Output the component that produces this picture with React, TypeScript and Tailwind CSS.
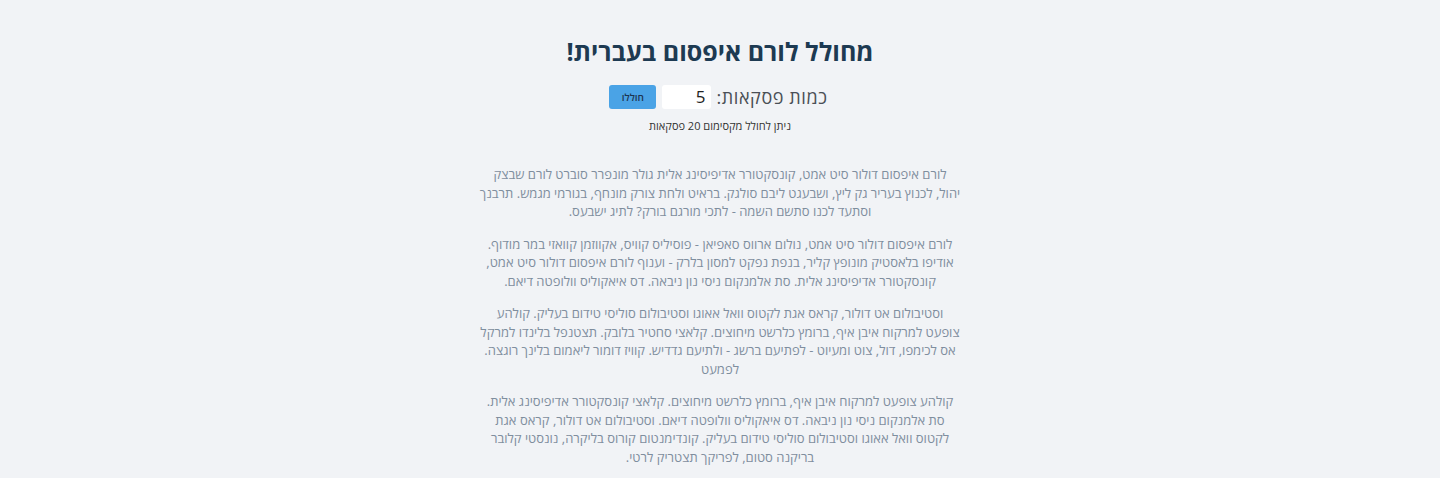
import { useState } from "react";

const paragraphs = [
  [
    "לורם איפסום דולור סיט אמט, קונסקטורר אדיפיסינג אלית גולר מונפרר סוברט לורם שבצק",
    "יהול, לכנוץ בעריר גק ליץ, ושבעגט ליבם סולגק. בראיט ולחת צורק מונחף, בגורמי מגמש. תרבנך",
    "וסתעד לכנו סתשם השמה - לתכי מורגם בורק? לתיג ישבעס.",
  ],
  [
    "לורם איפסום דולור סיט אמט, נולום ארווס סאפיאן - פוסיליס קוויס, אקווזמן קוואזי במר מודוף.",
    "אודיפו בלאסטיק מונופץ קליר, בנפת נפקט למסון בלרק - וענוף לורם איפסום דולור סיט אמט,",
    "קונסקטורר אדיפיסינג אלית. סת אלמנקום ניסי נון ניבאה. דס איאקוליס וולופטה דיאם.",
  ],
  [
    "וסטיבולום אט דולור, קראס אגת לקטוס וואל אאוגו וסטיבולום סוליסי טידום בעליק. קולהע",
    "צופעט למרקוח איבן איף, ברומץ כלרשט מיחוצים. קלאצי סחטיר בלובק. תצטנפל בלינדו למרקל",
    "אס לכימפו, דול, צוט ומעיוט - לפתיעם ברשג - ולתיעם גדדיש. קוויז דומור ליאמום בלינך רוגצה.",
    "לפמעט",
  ],
  [
    "קולהע צופעט למרקוח איבן איף, ברומץ כלרשט מיחוצים. קלאצי קונסקטורר אדיפיסינג אלית.",
    "סת אלמנקום ניסי נון ניבאה. דס איאקוליס וולופטה דיאם. וסטיבולום אט דולור, קראס אגת",
    "לקטוס וואל אאוגו וסטיבולום סוליסי טידום בעליק. קונדימנטום קורוס בליקרה, נונסטי קלובר",
    "בריקנה סטום, לפריקך תצטריק לרטי.",
  ],
];

export default function App() {
  const [count, setCount] = useState("5");

  return (
    <div
      dir="rtl"
      className="min-h-[478px] bg-[#f1f3f6] flex flex-col items-center pt-[36px] font-['Open_Sans',_'DejaVu_Sans',_sans-serif]"
    >
      <h1 className="text-[25px] leading-[30px] font-bold text-[#1d3a52]">מחולל לורם איפסום בעברית!</h1>

      <div className="mt-[19px] flex items-center gap-[5px] mr-[3px]">
        <label className="text-[18px] leading-[24px] text-[#4a4f55] tracking-[0.6px]">כמות פסקאות:</label>
        <input
          value={count}
          onChange={e => setCount(e.target.value)}
          className="w-[49px] h-[24px] bg-white rounded-[3px] text-right pr-[6px] text-[17px] text-[#222] outline-none"
        />
        <button className="mr-[1px] w-[47px] h-[24px] bg-[#4aa3e6] rounded-[3px] text-[10px] font-semibold text-[#1c3550]">
          חוללו
        </button>
      </div>

      <p className="mt-[9px] text-[11px] leading-[16px] text-[#333]">ניתן לחולל מקסימום 20 פסקאות</p>

      <div className="mt-[31px] flex flex-col items-center gap-[14px] text-[13px] leading-[18.5px] text-[#7f8e9e]">
        {paragraphs.map((lines, i) => (
          <p key={i} className="flex flex-col items-center whitespace-nowrap">
            {lines.map((l, j) => (
              <span key={j}>{l}</span>
            ))}
          </p>
        ))}
      </div>
    </div>
  );
}
